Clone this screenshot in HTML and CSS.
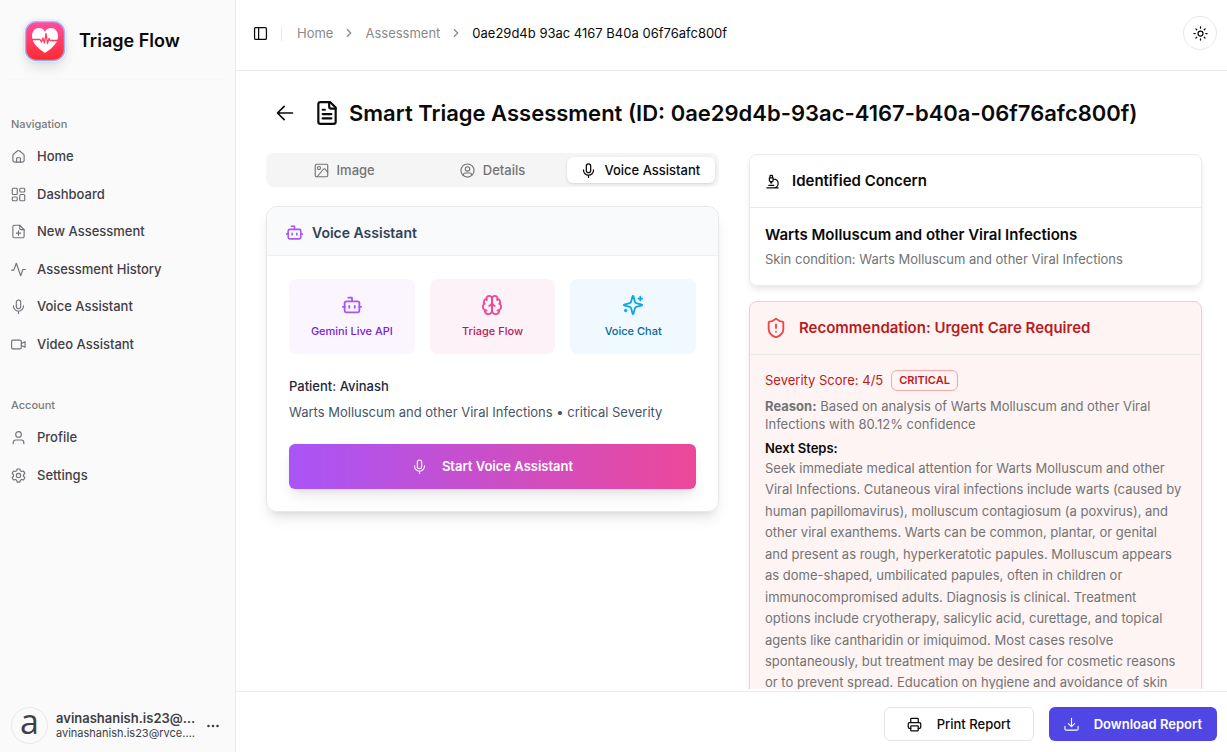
FILE: index.html
```html
<!DOCTYPE html>
<html lang="en">
<head>
<meta charset="utf-8">
<meta name="viewport" content="width=device-width, initial-scale=1">
<title>Triage Flow</title>
<link rel="stylesheet" href="styles.css">
</head>
<body>
<svg class="sprite" aria-hidden="true">
  <symbol id="home" viewBox="0 0 24 24"><path d="M15 21v-6a1 1 0 0 0-1-1h-4a1 1 0 0 0-1 1v6"/><path d="M3 10.500a3 3 0 0 1 1.100-2.300l6-5a3 3 0 0 1 3.800 0l6 5a3 3 0 0 1 1.100 2.300V18a3 3 0 0 1-3 3H6a3 3 0 0 1-3-3z"/></symbol>
  <symbol id="dashboard" viewBox="0 0 24 24"><rect x="2" y="2" width="8" height="10" rx="1.500"/><rect x="14" y="2" width="8" height="6" rx="1.500"/><rect x="14" y="12" width="8" height="10" rx="1.500"/><rect x="2" y="16" width="8" height="6" rx="1.500"/></symbol>
  <symbol id="file-plus" viewBox="0 0 24 24"><path d="M14 2H5.500a2.500 2.500 0 0 0-2.500 2.500v15A2.500 2.500 0 0 0 5.500 22h13a2.500 2.500 0 0 0 2.500-2.500V9z"/><path d="M14 2v5a2 2 0 0 0 2 2h5M12 11v7M8.500 14.500h7"/></symbol>
  <symbol id="activity" viewBox="0 0 24 24"><path d="M1 13h3.500L8.500 2l7 20L19 12h4"/></symbol>
  <symbol id="mic" viewBox="0 0 24 24"><rect x="8.500" y="1.500" width="7" height="14" rx="3.500"/><path d="M4 11v.500a8 8 0 0 0 16 0V11M12 19.500V23"/></symbol>
  <symbol id="video" viewBox="0 0 24 24"><rect x="1" y="5" width="15.500" height="14" rx="2"/><path d="m16.500 10.500 6-3v9l-6-3"/></symbol>
  <symbol id="user" viewBox="0 0 24 24"><circle cx="12" cy="7" r="4.500"/><path d="M3.500 22v-2a4 4 0 0 1 4-4h9a4 4 0 0 1 4 4v2"/></symbol>
  <symbol id="settings" viewBox="0 0 24 24"><circle cx="12" cy="12" r="3.500"/><path d="M9.800 1.500h4.400l.8 3 2 1.200 3-.9 2.200 3.800L20 10.800v2.400l2.200 2.200-2.200 3.800-3-.9-2 1.200-.8 3H9.800l-.8-3-2-1.200-3 .9-2.200-3.800L4 13.200v-2.400L1.800 8.600 4 4.800l3 .9 2-1.200z"/></symbol>
  <symbol id="panel" viewBox="0 0 24 24"><rect x="2.500" y="2.500" width="19" height="19" rx="2"/><path d="M9 3v18"/></symbol>
  <symbol id="chevron" viewBox="0 0 24 24"><path d="m9 18 6-6-6-6"/></symbol>
  <symbol id="sun" viewBox="0 0 24 24"><circle cx="12" cy="12" r="4"/><path d="M12 1.500v2M12 20.500v2M4.600 4.600 6 6M18 18l1.400 1.400M1.500 12h2M20.500 12h2M6 18l-1.400 1.400M19.400 4.600 18 6"/></symbol>
  <symbol id="arrow" viewBox="0 0 24 24"><path d="m11 20-8-8 8-8M3 12h18"/></symbol>
  <symbol id="file-text" viewBox="0 0 24 24"><path d="M15 2H6a2 2 0 0 0-2 2v16a2 2 0 0 0 2 2h12a2 2 0 0 0 2-2V7z"/><path d="M14 2v4a2 2 0 0 0 2 2h4M10 9H8M16 13H8M16 17H8"/></symbol>
  <symbol id="image" viewBox="0 0 24 24"><rect x="2" y="2" width="20" height="20" rx="2"/><circle cx="8" cy="8" r="2.500"/><path d="m22 15-4-5a2 2 0 0 0-3 0L5 22"/></symbol>
  <symbol id="user-circle" viewBox="0 0 24 24"><circle cx="12" cy="12" r="10.500"/><circle cx="12" cy="9.500" r="3.500"/><path d="M5.500 20v-1a3 3 0 0 1 3-3h7a3 3 0 0 1 3 3v1"/></symbol>
  <symbol id="bot" viewBox="0 0 24 24"><path d="M12 8V4H8"/><rect x="4" y="8" width="16" height="12" rx="2"/><path d="M2 14h2M20 14h2M15 13v2M9 13v2"/></symbol>
  <symbol id="brain" viewBox="0 0 24 24"><path d="M12 5a3 3 0 1 0-5.997.125 4 4 0 0 0-2.526 5.770 4 4 0 0 0 .556 6.588A4 4 0 1 0 12 18Z"/><path d="M12 5a3 3 0 1 1 5.997.125 4 4 0 0 1 2.526 5.770 4 4 0 0 1-.556 6.588A4 4 0 1 1 12 18Z"/><path d="M15 13a4.500 4.500 0 0 1-3-4 4.500 4.500 0 0 1-3 4M17.599 6.500a3 3 0 0 0 .399-1.375M6.003 5.125A3 3 0 0 0 6.401 6.500M3.477 10.896a4 4 0 0 1 .585-.396M19.938 10.500a4 4 0 0 1 .585.396M6 18a4 4 0 0 1-1.967-.516M19.967 17.484A4 4 0 0 1 18 18"/></symbol>
  <symbol id="sparkles" viewBox="0 0 24 24"><path d="M9.937 15.500A2 2 0 0 0 8.500 14.063l-6.135-1.582a.5.5 0 0 1 0-.962L8.500 9.936A2 2 0 0 0 9.937 8.500l1.582-6.135a.5.5 0 0 1 .963 0L14.063 8.500A2 2 0 0 0 15.500 9.937l6.135 1.581a.5.5 0 0 1 0 .964L15.500 14.063a2 2 0 0 0-1.437 1.437l-1.582 6.135a.5.5 0 0 1-.963 0z"/><path d="M20 3v4M22 5h-4M4 17v2M5 18H3"/></symbol>
  <symbol id="microscope" viewBox="0 0 24 24"><path d="M6 18h8M3 22h18M14 22a7 7 0 1 0 0-14h-1M9 14h2M9 12a2 2 0 0 1-2-2V6h6v4a2 2 0 0 1-2 2ZM12 6V3a1 1 0 0 0-1-1H9a1 1 0 0 0-1 1v3"/></symbol>
  <symbol id="shield" viewBox="0 0 24 24"><path d="M20 13c0 5-3.500 7.500-7.660 8.950a1 1 0 0 1-.67-.01C7.500 20.500 4 18 4 13V6a1 1 0 0 1 1-1c2 0 4.500-1.200 6.240-2.720a1.170 1.170 0 0 1 1.520 0C14.510 3.810 17 5 19 5a1 1 0 0 1 1 1zM12 8v4M12 16h.01"/></symbol>
  <symbol id="printer" viewBox="0 0 24 24"><path d="M6 18H4a2 2 0 0 1-2-2v-5a2 2 0 0 1 2-2h16a2 2 0 0 1 2 2v5a2 2 0 0 1-2 2h-2M6 9V3a1 1 0 0 1 1-1h10a1 1 0 0 1 1 1v6"/><rect x="6" y="14" width="12" height="8" rx="1"/></symbol>
  <symbol id="download" viewBox="0 0 24 24"><path d="M12 2v13M7 10.500l5 5 5-5M1.500 15v4a2 2 0 0 0 2 2h17a2 2 0 0 0 2-2v-4"/></symbol>
</svg>
<div class="app">
  <aside class="sidebar">
    <div class="brand">
      <svg class="brand-logo" viewBox="0 0 42 42" aria-hidden="true">
        <defs><linearGradient id="logo-fill" x1="0" y1="0" x2="0" y2="1"><stop offset="0" stop-color="#ff4fa3"/><stop offset="1" stop-color="#fe2a2a"/></linearGradient>
        <linearGradient id="logo-rim" x1="0" y1="0" x2="0" y2="1"><stop offset="0" stop-color="#a8c0fa"/><stop offset="1" stop-color="#96a8ee"/></linearGradient></defs>
        <rect x="1.500" y="1.500" width="39" height="39" rx="11" fill="url(#logo-fill)" stroke="url(#logo-rim)" stroke-width="1.500"/>
        <path d="M21 33C12 27 8 22 8 16c0-4.500 3-8 7-8 2.800 0 5 1.500 6 4 1-2.500 3.200-4 6-4 4 0 7 3.500 7 8 0 6-4 11-13 17z" fill="#fff"/>
        <path d="M7.500 19.500H16l1.500 2.500 1.500-4 1.500 5 1.500-9.500 1.500 10 1.500-5 1 2H34.500" fill="none" stroke="#ff3c62" stroke-width="1.300" stroke-linejoin="round"/>
      </svg>
      <span class="brand-name">Triage Flow</span>
    </div>
    <nav class="nav" aria-label="Main">
      <section>
        <h2 class="nav-label">Navigation</h2>
        <ul class="nav-list">
          <li><a href="#"><svg class="icon thin"><use href="#home"/></svg>Home</a></li>
          <li><a href="#"><svg class="icon thin"><use href="#dashboard"/></svg>Dashboard</a></li>
          <li><a href="#"><svg class="icon thin"><use href="#file-plus"/></svg>New Assessment</a></li>
          <li><a href="#"><svg class="icon thin"><use href="#activity"/></svg>Assessment History</a></li>
          <li><a href="#"><svg class="icon thin"><use href="#mic"/></svg>Voice Assistant</a></li>
          <li><a href="#"><svg class="icon thin"><use href="#video"/></svg>Video Assistant</a></li>
        </ul>
      </section>
      <section>
        <h2 class="nav-label">Account</h2>
        <ul class="nav-list nav-list-short">
          <li><a href="#"><svg class="icon thin"><use href="#user"/></svg>Profile</a></li>
          <li><a href="#"><svg class="icon thin"><use href="#settings"/></svg>Settings</a></li>
        </ul>
      </section>
    </nav>
    <button class="account" type="button">
      <span class="avatar">a</span>
      <span class="account-text"><span class="account-name">avinashanish.is23@rvce.edu.in</span><span class="account-mail">avinashanish.is23@rvce.edu.in</span></span>
      <svg class="dots" viewBox="0 0 12 4" aria-hidden="true"><circle cx="1.500" cy="2" r="1.300"/><circle cx="6" cy="2" r="1.300"/><circle cx="10.500" cy="2" r="1.300"/></svg>
    </button>
  </aside>
  <div class="main">
    <header class="topbar">
      <button class="toggle" type="button" aria-label="Toggle sidebar"><svg class="icon"><use href="#panel"/></svg></button>
      <span class="rule"></span>
      <nav class="crumbs" aria-label="Breadcrumb">
        <a href="#">Home</a><svg class="icon"><use href="#chevron"/></svg>
        <a href="#">Assessment</a><svg class="icon"><use href="#chevron"/></svg>
        <span class="current">0ae29d4b 93ac 4167 B40a 06f76afc800f</span>
      </nav>
      <button class="theme" type="button" aria-label="Toggle theme"><svg class="icon"><use href="#sun"/></svg></button>
    </header>
    <main class="content">
      <div class="heading">
        <button class="back" type="button" aria-label="Back"><svg class="icon icon-lg"><use href="#arrow"/></svg></button>
        <svg class="icon icon-xl"><use href="#file-text"/></svg>
        <h1>Smart Triage Assessment (ID: 0ae29d4b-93ac-4167-b40a-06f76afc800f)</h1>
      </div>
      <div class="columns">
        <div class="left">
          <div class="tabs" role="tablist">
            <button class="tab" type="button" role="tab"><svg class="icon thin"><use href="#image"/></svg>Image</button>
            <button class="tab" type="button" role="tab"><svg class="icon thin"><use href="#user-circle"/></svg>Details</button>
            <button class="tab active" type="button" role="tab" aria-selected="true"><svg class="icon"><use href="#mic"/></svg>Voice Assistant</button>
          </div>
          <section class="assistant">
            <h2 class="assistant-head"><svg class="icon icon-md"><use href="#bot"/></svg>Voice Assistant</h2>
            <div class="assistant-body">
              <div class="features">
                <div class="feature purple"><svg class="icon icon-lg"><use href="#bot"/></svg>Gemini Live API</div>
                <div class="feature pink"><svg class="icon icon-lg"><use href="#brain"/></svg>Triage Flow</div>
                <div class="feature sky"><svg class="icon icon-lg"><use href="#sparkles"/></svg>Voice Chat</div>
              </div>
              <div class="patient">
                <p class="patient-name">Patient: Avinash</p>
                <p>Warts Molluscum and other Viral Infections • critical Severity</p>
              </div>
              <button class="start" type="button"><svg class="icon thin"><use href="#mic"/></svg>Start Voice Assistant</button>
            </div>
          </section>
        </div>
        <div class="right">
          <section class="card">
            <h2 class="card-head"><svg class="icon"><use href="#microscope"/></svg>Identified Concern</h2>
            <div class="card-body">
              <h3>Warts Molluscum and other Viral Infections</h3>
              <p>Skin condition: Warts Molluscum and other Viral Infections</p>
            </div>
          </section>
          <section class="card urgent">
            <h2 class="card-head"><svg class="icon icon-lg"><use href="#shield"/></svg>Recommendation: Urgent Care Required</h2>
            <div class="urgent-body">
              <div class="score">Severity Score: 4/5 <span class="badge">CRITICAL</span></div>
              <p class="reason"><strong>Reason:</strong> Based on analysis of Warts Molluscum and other Viral Infections with 80.12% confidence</p>
              <h3 class="steps-title">Next Steps:</h3>
              <p class="steps">Seek immediate medical attention for Warts Molluscum and other Viral Infections. Cutaneous viral infections include warts (caused by human papillomavirus), molluscum contagiosum (a poxvirus), and other viral exanthems. Warts can be common, plantar, or genital and present as rough, hyperkeratotic papules. Molluscum appears as dome-shaped, umbilicated papules, often in children or immunocompromised adults. Diagnosis is clinical. Treatment options include cryotherapy, salicylic acid, curettage, and topical agents like cantharidin or imiquimod. Most cases resolve spontaneously, but treatment may be desired for cosmetic reasons or to prevent spread. Education on hygiene and avoidance of skin</p>
            </div>
          </section>
        </div>
      </div>
    </main>
    <footer class="actions">
      <button class="print" type="button"><svg class="icon"><use href="#printer"/></svg>Print Report</button>
      <button class="download" type="button"><svg class="icon thin"><use href="#download"/></svg>Download Report</button>
    </footer>
  </div>
</div>
</body>
</html>
```
FILE: styles.css
```css
* { box-sizing: border-box; }
body { margin: 0; font: 13px/19px Inter, "Liberation Sans", sans-serif; color: #0a0a0a; background: #fff; }
h1, h2, h3, p, ul { margin: 0; padding: 0; }
ul { list-style: none; }
a { color: inherit; text-decoration: none; }
button { font: inherit; color: inherit; background: none; border: 0; padding: 0; cursor: pointer; }
.sprite { position: absolute; width: 0; height: 0; }
.icon { width: 15px; height: 15px; flex: none; fill: none; stroke: currentColor; stroke-width: 2; stroke-linecap: round; stroke-linejoin: round; }
.thin { stroke-width: 1.800; }
.icon-md { width: 19px; height: 19px; }
.icon-lg { width: 22px; height: 22px; }
.icon-xl { width: 26px; height: 26px; }

.app { display: grid; grid-template-columns: 236px minmax(0, 1fr); height: 100vh; overflow: hidden; }
.sidebar { display: flex; flex-direction: column; min-height: 0; background: #fafafa; border-right: 1px solid #ebebeb; }
.brand { display: flex; align-items: center; gap: 13px; height: 80px; margin: 0 8px 0 5px; padding: 3px 0 0 19px; border-bottom: 1px solid #f7f7f7; }
.brand-logo { width: 42px; height: 42px; border-radius: 12px; box-shadow: 0 8px 12px -2px rgb(0 0 0 / 10%), 0 0 3px rgb(120 150 240 / 30%); }
.brand-name { font-size: 18px; line-height: 28px; font-weight: 600; }
.nav { flex: 1; display: flex; flex-direction: column; gap: 27px; padding: 29px 11px 0; }
.nav-label { height: 29px; font-size: 11px; line-height: 30px; font-weight: 500; color: #7a7a7a; }
.nav-list { display: grid; grid-auto-rows: 1fr; min-height: 225px; color: #3f3f46; font-weight: 500; }
.nav-list-short { min-height: 75px; }
.nav-list a { display: flex; align-items: center; gap: 11px; height: 100%; }
.nav-list .icon { color: #71717a; }
.account { display: flex; align-items: center; gap: 8px; padding: 0 16px 8px 11px; text-align: left; color: #3f3f46; }
.avatar { display: flex; align-items: center; justify-content: center; flex: none; width: 37px; height: 37px; padding-bottom: 10px; border: 1px solid #e8e8e8; border-radius: 50%; font-family: "Open Sans", sans-serif; font-size: 34px; line-height: 32px; }
.account-text { flex: 1; min-width: 0; display: grid; }
.account-name, .account-mail { overflow: hidden; text-overflow: ellipsis; white-space: nowrap; }
.account-name { font-weight: 600; line-height: 16px; }
.account-mail { font-size: 11px; line-height: 15px; }
.dots { width: 12px; height: 4px; fill: #3f3f46; }

.main { display: flex; flex-direction: column; min-width: 0; min-height: 0; }
.topbar { flex: none; display: flex; align-items: center; height: 71px; padding: 0 10px 4px 17px; border-bottom: 1px solid #ebebeb; }
.toggle, .back, .theme { display: flex; align-items: center; justify-content: center; }
.rule { width: 1px; height: 15px; margin: 0 15px 0 13px; background: #ebebeb; }
.crumbs { display: flex; align-items: center; gap: 9px; color: #8a8a8a; }
.crumbs .icon { width: 14px; height: 14px; }
.current { color: #0a0a0a; }
.theme { width: 34px; height: 34px; margin-left: auto; border: 1px solid #e8e8e8; border-radius: 50%; }

.content { flex: 1; min-height: 0; overflow: hidden; padding: 26px 25px 0 30px; margin-bottom: 2px; }
.heading { display: flex; align-items: center; height: 32px; }
.back { width: 37px; height: 32px; margin-right: 11px; }
.back .icon { width: 20px; height: 20px; }
h1 { margin-left: 9px; font-size: 22px; line-height: 30px; font-weight: 600; white-space: nowrap; }
.columns { display: grid; grid-template-columns: 1fr 1fr; gap: 30px; align-items: start; margin-top: 24px; }

.tabs { display: grid; grid-template-columns: repeat(3, 1fr); height: 34px; padding: 4px; background: #f5f5f5; border-radius: 8px; }
.tab { display: flex; align-items: center; justify-content: center; gap: 8px; border-radius: 6px; color: #737373; font-weight: 500; white-space: nowrap; }
.tab.active { color: #0a0a0a; background: #fff; box-shadow: 0 1px 3px rgb(0 0 0 / 14%); }
.assistant { margin-top: 19px; border: 1px solid #e8e8ea; border-radius: 11px; overflow: hidden; box-shadow: 0 9px 14px -3px rgb(0 0 0 / 10%), 0 4px 6px -4px rgb(0 0 0 / 10%); }
.assistant-head { display: flex; align-items: center; gap: 8px; height: 49px; padding: 3px 18px 0; background: #f8fafc; border-bottom: 1px solid #f0f1f4; font-size: 14px; line-height: 22px; font-weight: 600; color: #334155; }
.assistant-head .icon, .purple .icon { color: #a855f7; }
.assistant-body { padding: 23px 22px 22px; }
.features { display: grid; grid-template-columns: repeat(3, 1fr); gap: 15px; }
.feature { display: flex; flex-direction: column; align-items: center; gap: 8px; height: 75px; padding-top: 15px; border-radius: 8px; font-size: 11px; line-height: 15px; font-weight: 500; }
.purple { background: #faf5ff; color: #7e22ce; }
.pink { background: #fdf2f8; color: #be185d; }
.pink .icon { color: #ec4899; }
.sky { background: #f0f9ff; color: #0369a1; }
.sky .icon { color: #0ea5e9; }
.patient { display: grid; gap: 7px; margin: 23px 0 22px; color: #475569; }
.patient-name { color: #1e293b; font-weight: 500; }
.start { display: flex; align-items: center; justify-content: center; gap: 15px; width: 100%; height: 45px; border-radius: 6px; color: #fff; font-weight: 600; background: linear-gradient(to right, #a855f7, #ec4899); box-shadow: 0 9px 14px -3px rgb(0 0 0 / 10%), 0 4px 6px -4px rgb(0 0 0 / 10%); }

.right { display: grid; gap: 15px; padding-top: 1px; }
.card { border: 1px solid #ebebeb; border-radius: 8px; box-shadow: 0 4px 6px -1px rgb(0 0 0 / 10%); }
.card-head { display: flex; align-items: center; gap: 12px; height: 53px; padding: 0 15px; border-bottom: 1px solid #ebebeb; font-size: 15px; line-height: 22px; font-weight: 600; }
.card-body { padding: 16px 15px; }
.card-body h3 { font-size: 15px; line-height: 22px; font-weight: 600; }
.card-body p { margin-top: 4px; color: #737373; }
.urgent { background: #fef4f4; border-color: #fbcaca; }
.urgent .card-head { color: #b91c1c; }
.urgent .card-head .icon { color: #ef4444; }
.urgent-body { padding: 15px; color: #737373; }
.score { display: flex; align-items: center; gap: 8px; color: #b91c1c; }
.badge { padding: 2px 7px; border: 1px solid #fca5a5; border-radius: 6px; font-size: 11px; line-height: 15px; font-weight: 600; }
.reason { margin-top: 6px; line-height: 18px; }
.steps-title { margin-top: 6px; font-size: 13px; line-height: 19px; font-weight: 600; color: #0a0a0a; }
.steps { padding-right: 4px; line-height: 1.65; }

.actions { flex: none; display: flex; justify-content: flex-end; gap: 15px; padding: 15px 10px 11px; border-top: 1px solid #ebebeb; }
.actions button { display: flex; align-items: center; justify-content: center; gap: 15px; height: 34px; padding: 0 15px; border-radius: 6px; }
.actions .print { padding: 0 22px; border: 1px solid #e5e5e5; font-weight: 500; }
.actions .download { background: #4f46e5; color: #fff; font-weight: 600; }
```
